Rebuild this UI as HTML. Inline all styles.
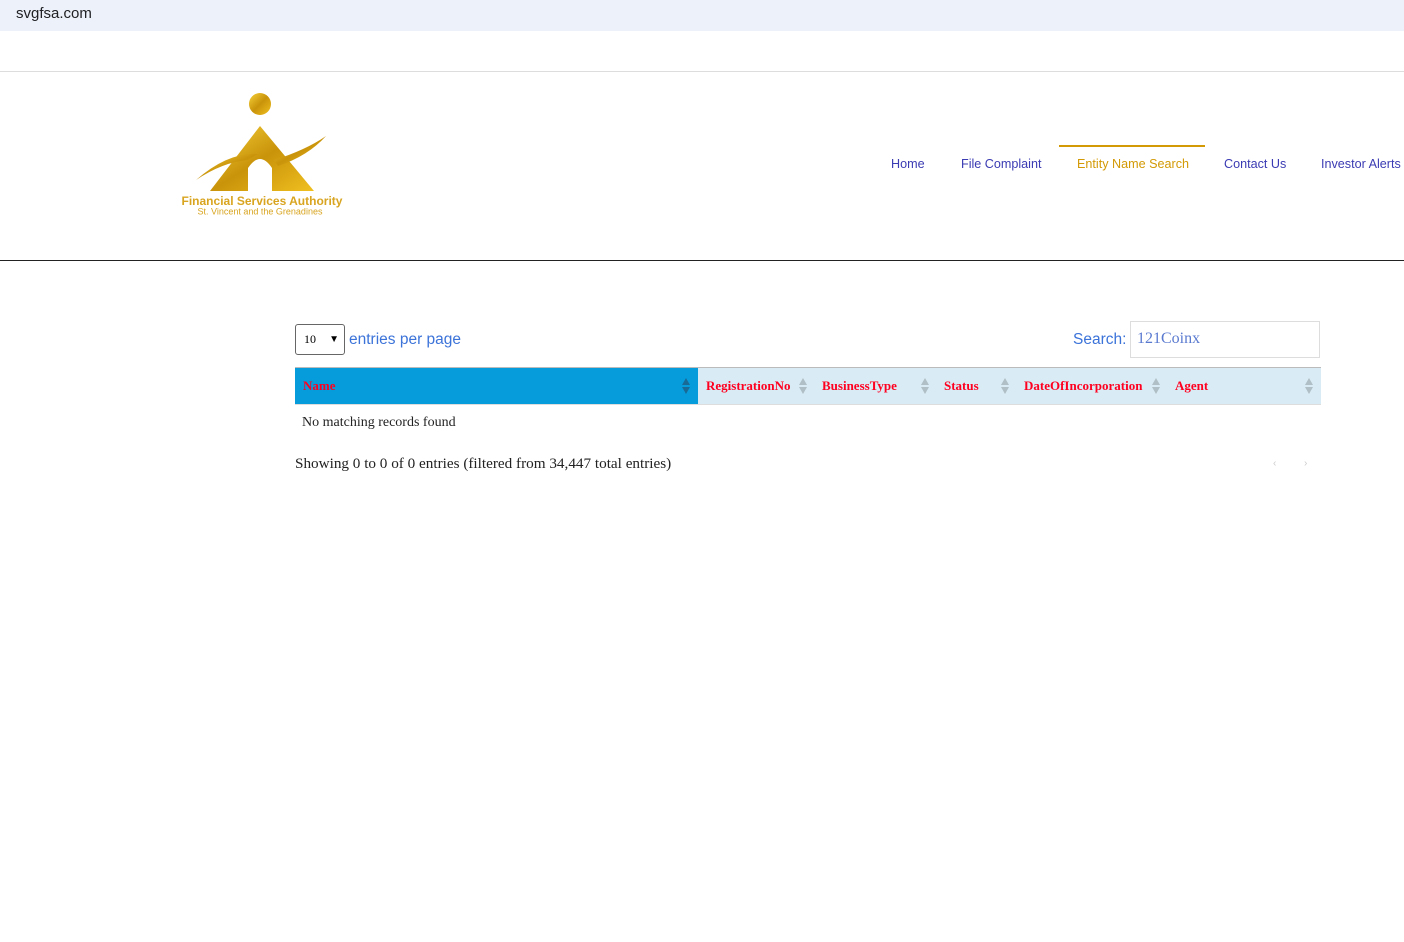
<!DOCTYPE html>
<html><head><meta charset="utf-8"><style>
body{margin:0;width:1404px;height:942px;background:#fff;position:relative;overflow:hidden;font-family:"Liberation Sans",sans-serif}
.abs{position:absolute}
.top{left:0;top:0;width:1404px;height:31px;background:#edf1f9}
.url{left:16px;top:5px;font-size:15px;color:#202124}
.nav a{position:absolute;top:157px;font-size:12.6px;color:#3b3bb3;text-decoration:none;white-space:nowrap}
.th{position:absolute;top:378px;font-family:"Liberation Serif",serif;font-size:13px;font-weight:bold;color:#ff0020}
.sort{position:absolute;top:377px;width:8px;height:18px}
</style></head><body>
<div class="abs top"></div>
<div class="abs url">svgfsa.com</div>
<div class="abs" style="left:0;top:71px;width:1404px;height:1px;background:#ddd"></div>
<svg class="abs" style="left:178px;top:90px" width="170" height="130" viewBox="0 0 170 130">
<defs><linearGradient id="g" x1="0" y1="0" x2="1" y2="1"><stop offset="0" stop-color="#f7d23a"/><stop offset=".5" stop-color="#c9930a"/><stop offset="1" stop-color="#f0c020"/></linearGradient></defs>
<circle cx="82" cy="14" r="11" fill="url(#g)"/>
<path d="M82 36 L32 101 L70 101 L70 78 Q82 60 94 78 L94 101 L136 101 Z" fill="url(#g)"/>
<path d="M18 90 Q50 62 80 64 L70 70 Q45 72 18 90Z" fill="url(#g)"/>
<path d="M96 70 Q128 60 148 46 Q130 66 100 76Z" fill="url(#g)"/>
<text x="84" y="115" text-anchor="middle" font-family="Liberation Sans" font-weight="bold" font-size="12" fill="#d9a520">Financial Services Authority</text>
<text x="82" y="124.5" text-anchor="middle" font-family="Liberation Sans" font-size="9" fill="#d9a520">St. Vincent and the Grenadines</text>
</svg>
<div class="nav">
<a style="left:891px">Home</a>
<a style="left:961px">File Complaint</a>
<a style="left:1077px;color:#d39a06">Entity Name Search</a>
<a style="left:1224px">Contact Us</a>
<a style="left:1321px">Investor Alerts</a>
</div>
<div class="abs" style="left:1059px;top:145px;width:146px;height:2px;background:#d39a06"></div>
<div class="abs" style="left:0;top:260px;width:1404px;height:1px;background:#222"></div>

<div class="abs" style="left:295px;top:324px;width:50px;height:31px;border:1px solid #666;border-radius:3px;font-family:'Liberation Serif',serif;font-size:12px;line-height:29px;box-sizing:border-box;padding-left:8px">10<span style="position:absolute;right:5px;top:0;font-size:10px">&#9660;</span></div>
<div class="abs" style="left:349px;top:331px;font-size:15.5px;color:#3b73d9">entries per page</div>
<div class="abs" style="left:1073px;top:331px;font-size:15.5px;color:#3b73d9">Search:</div>
<div class="abs" style="left:1130px;top:321px;width:190px;height:37px;border:1px solid #ddd;box-sizing:border-box;font-family:'Liberation Serif',serif;font-size:16px;color:#5a7ad0;padding:8px 6px">121Coinx</div>

<div class="abs" style="left:295px;top:367px;width:1026px;height:38px;background:#d9ebf5;border-top:1px solid #bbb;border-bottom:1px solid #ddd;box-sizing:border-box"></div>
<div class="abs" style="left:295px;top:368px;width:403px;height:36px;background:#069cdb"></div>
<div class="th" style="left:303px">Name</div>
<div class="th" style="left:706px">RegistrationNo</div>
<div class="th" style="left:822px">BusinessType</div>
<div class="th" style="left:944px">Status</div>
<div class="th" style="left:1024px">DateOfIncorporation</div>
<div class="th" style="left:1175px">Agent</div>
<svg class="sort" style="left:682px" viewBox="0 0 8 18"><path d="M0 8L4 1L8 8Z M0 10L4 17L8 10Z" fill="#1a6a96"/></svg>
<svg class="sort" style="left:799px" viewBox="0 0 8 18"><path d="M0 8L4 1L8 8Z M0 10L4 17L8 10Z" fill="#b0bec5"/></svg>
<svg class="sort" style="left:921px" viewBox="0 0 8 18"><path d="M0 8L4 1L8 8Z M0 10L4 17L8 10Z" fill="#b0bec5"/></svg>
<svg class="sort" style="left:1001px" viewBox="0 0 8 18"><path d="M0 8L4 1L8 8Z M0 10L4 17L8 10Z" fill="#b0bec5"/></svg>
<svg class="sort" style="left:1152px" viewBox="0 0 8 18"><path d="M0 8L4 1L8 8Z M0 10L4 17L8 10Z" fill="#b0bec5"/></svg>
<svg class="sort" style="left:1305px" viewBox="0 0 8 18"><path d="M0 8L4 1L8 8Z M0 10L4 17L8 10Z" fill="#b0bec5"/></svg>

<div class="abs" style="left:302px;top:415px;font-family:'Liberation Serif',serif;font-size:14px;color:#222">No matching records found</div>
<div class="abs" style="left:295px;top:455px;font-family:'Liberation Serif',serif;font-size:15.2px;color:#222">Showing 0 to 0 of 0 entries (filtered from 34,447 total entries)</div>
<div class="abs" style="left:1273px;top:458px;font-size:10px;color:#ccc">&#8249;</div>
<div class="abs" style="left:1304px;top:458px;font-size:10px;color:#ccc">&#8250;</div>
</body></html>
